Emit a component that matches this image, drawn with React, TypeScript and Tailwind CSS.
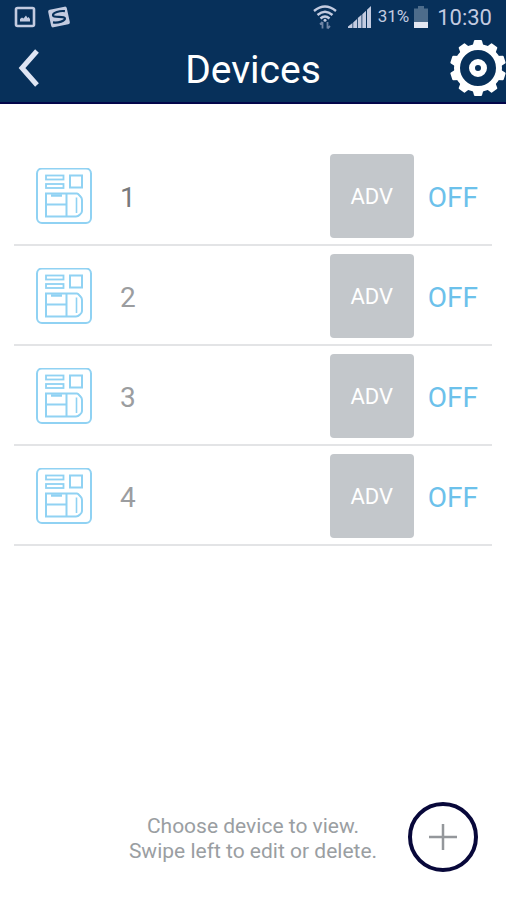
import React from "react";

type Device = { id: number; name: string; active: boolean };

const devices: Device[] = [
  { id: 1, name: "1", active: true },
  { id: 2, name: "2", active: false },
  { id: 3, name: "3", active: false },
  { id: 4, name: "4", active: false },
];

const gearTeeth = [0, 36, 72, 108, 144, 180, 216, 252, 288, 324];

const GearIcon: React.FC = () => (
  <svg viewBox="0 0 56 56" className="h-14 w-14" fill="none">
    <circle cx="28" cy="28" r="21" stroke="#fff" strokeWidth="6" />
    {gearTeeth.map((angle) => (
      <path
        key={angle}
        d="M22 8 L24 0.8 Q24.2 0 25 0 H31 Q31.8 0 32 0.8 L34 8 Z"
        fill="#fff"
        transform={`rotate(${angle} 28 28)`}
      />
    ))}
    <circle cx="28" cy="28" r="6" stroke="#fff" strokeWidth="6" />
  </svg>
);

const PanelIcon: React.FC = () => (
  <svg
    viewBox="0 0 56 56"
    className="h-14 w-14 shrink-0"
    fill="none"
    stroke="#90d2f3"
    strokeWidth="2"
  >
    <rect x="1" y="0.5" width="54" height="54.5" rx="5" />
    <rect x="10" y="7.5" width="17.500" height="4" strokeWidth="1.800" />
    <rect x="10" y="16" width="17.500" height="4" strokeWidth="1.800" />
    <rect x="34" y="7.5" width="12" height="12" />
    <path d="M10 25.500 H41 Q42 25.500 44.500 28.500 Q46 30 46 32 V43 Q46 45 44 46.500 Q42 48.500 40 48.500 H10 Z" />
    <path d="M30.500 25.500 V48.500 M10 36.500 H30.500" />
    <path d="M15 27.500 H26" strokeWidth="2.500" />
    <path d="M40.500 29.500 V45" strokeWidth="1.600" />
  </svg>
);

const StatusBar: React.FC = () => (
  <div className="flex h-[34px] items-center justify-between px-3.5 text-[#c3cbe0]">
    <div className="flex items-center gap-3">
      <svg viewBox="0 0 22 22" className="h-[22px] w-[22px]" fill="none">
        <rect
          x="2"
          y="2"
          width="18"
          height="18"
          rx="1.500"
          stroke="#c3cbe0"
          strokeWidth="2.600"
        />
        <path
          d="M6 15.500 V13 L8 11.500 L9.500 12.500 L12 9.500 L13.500 12 L14.500 11 L16 13 V15.500 Z"
          fill="#c3cbe0"
        />
      </svg>
      <svg viewBox="0 0 22 22" className="h-[22px] w-[22px]" fill="none">
        <g transform="rotate(-12 11 11)">
          <rect x="1.500" y="2" width="19" height="18" rx="2" fill="#c3cbe0" />
          <path
            d="M18 6.500 C13 4.800 5.500 5.500 5.500 8.200 C5.500 11 16.500 10.500 16.500 13.500 C16.500 16.200 9 16.800 4 15"
            stroke="#07305a"
            strokeWidth="2.200"
          />
        </g>
      </svg>
    </div>
    <div className="flex items-center">
      <svg
        viewBox="0 0 26 26"
        className="h-[26px] w-[26px]"
        fill="none"
        stroke="#c3cbe0"
        strokeWidth="2.400"
      >
        <path d="M2 7 Q13 -2 24 7" />
        <path d="M5.500 11 Q13 4.500 20.500 11" />
        <path d="M8.500 14.500 Q13 10.500 17.500 14.500" />
        <circle cx="13" cy="16.200" r="1.500" fill="#c3cbe0" stroke="none" />
        <path
          d="M10.500 24.500 V18 M8 20.500 L10.500 18 M15.500 18 V24.500 M18 22 L15.500 24.500"
          stroke="#6f84a5"
          strokeWidth="1.800"
        />
      </svg>
      <svg viewBox="0 0 24 24" className="ml-2.5 h-6 w-6" fill="#c3cbe0">
        <path d="M0 23 V21.500 L4.500 18 V23 Z M5.200 23 V17.500 L9 14 V23 Z M9.800 23 V13 L13.500 9.800 V23 Z M14.300 23 V9.200 L18 5.800 V23 Z M19 23 V4.800 L23 1 V23 Z" />
      </svg>
      <span className="ml-1.5 text-[17px]">31%</span>
      <svg viewBox="0 0 16 24" className="ml-1 h-6 w-4">
        <path d="M1 3.500 H5 V1 H11 V3.500 H15 V17 H1 Z" fill="#4d6c8b" />
        <rect x="1" y="17" width="14" height="6" fill="#e4e8f2" />
      </svg>
      <span className="ml-2 text-[22px]">10:30</span>
    </div>
  </div>
);

const DeviceRow: React.FC<{ device: Device }> = ({ device }) => (
  <li className="flex items-center border-b-2 border-[#e3e4e6] pt-2 pb-1.5 pl-[22px] pr-3.5">
    <PanelIcon />
    <span
      className={
        device.active
          ? "ml-7 flex-1 pt-1 text-[28px] text-[#77797c]"
          : "ml-7 flex-1 pt-1 text-[28px] text-[#9b9da0]"
      }
    >
      {device.name}
    </span>
    <button
      type="button"
      className="h-[84px] w-[84px] rounded bg-[#c3c7cb] text-[22px] text-white"
    >
      ADV
    </button>
    <button type="button" className="ml-3.5 pt-1 text-[28px] text-[#6cc1eb]">
      OFF
    </button>
  </li>
);

const App: React.FC = () => {
  return (
    <div className="flex min-h-screen flex-col bg-white font-[Roboto,sans-serif]">
      <header className="border-b-2 border-[#03064a] bg-[#07305a]">
        <StatusBar />
        <div className="grid h-[68px] grid-cols-[1fr_auto_1fr] items-center pl-4">
          <button type="button" aria-label="Back" className="w-6">
            <svg
              viewBox="0 0 24 38"
              className="h-[38px] w-6"
              fill="none"
              stroke="#dfe5f3"
              strokeWidth="5"
            >
              <path d="M21 2 L6 19 L21 36" />
            </svg>
          </button>
          <h1 className="pt-1 pr-4 text-[39px] text-white">Devices</h1>
          <button
            type="button"
            aria-label="Settings"
            className="justify-self-end"
          >
            <GearIcon />
          </button>
        </div>
      </header>

      <main className="flex-1 px-3.5 pt-[42px]">
        <ul>
          {devices.map((device) => (
            <DeviceRow key={device.id} device={device} />
          ))}
        </ul>
      </main>

      <footer className="grid grid-cols-[1fr_auto_1fr] items-center px-7 pb-7">
        <p className="col-start-2 pt-1 text-center text-[21px] leading-[25px] text-[#9a9ea2]">
          Choose device to view.
          <br />
          Swipe left to edit or delete.
        </p>
        <button
          type="button"
          aria-label="Add device"
          className="flex h-[70px] w-[70px] items-center justify-center justify-self-end rounded-full border-4 border-[#08083a]"
        >
          <svg
            viewBox="0 0 28 28"
            className="h-7 w-7"
            stroke="#94979b"
            strokeWidth="2.500"
          >
            <path d="M14 1 V27 M0 14 H28" />
          </svg>
        </button>
      </footer>
    </div>
  );
};

export default App;
